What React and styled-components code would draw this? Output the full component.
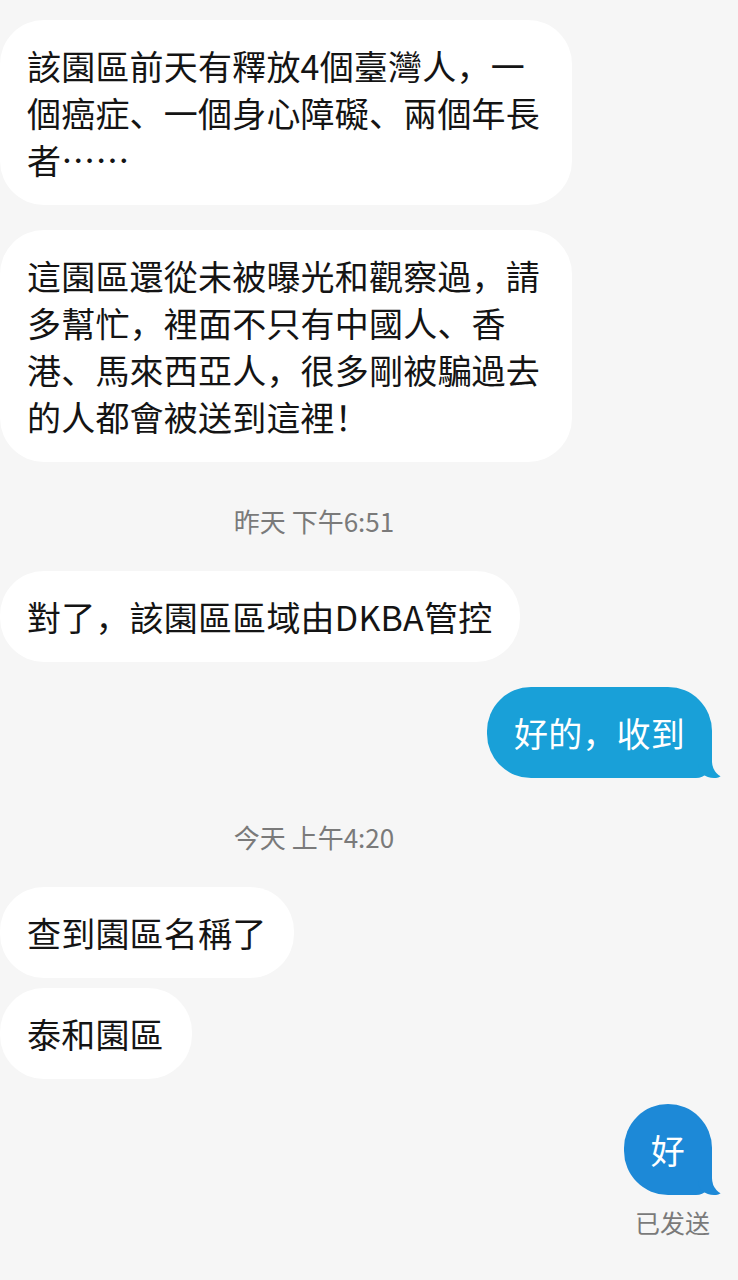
import styled, { createGlobalStyle } from "styled-components";

const PAGE_BG = "#f6f6f6";

const GlobalStyle = createGlobalStyle`
    body {
        margin: 0;
        background: ${PAGE_BG};
        font-family: "Noto Sans CJK SC", "Noto Sans CJK TC", "Noto Sans", sans-serif;
    }
`

const Conversa = styled.main`
    min-height: 1280px;
    padding: 20px 0 0;
    box-sizing: border-box;
    display: flex;
    flex-direction: column;
`

const Linha = styled.div`
    display: flex;
    justify-content: ${p => p.$meu ? "flex-end" : "flex-start"};
    padding: ${p => p.$meu ? "0 26px 0 0" : "0"};
    margin-top: ${p => p.$mt || 0}px;
`

const Balao = styled.div`
    position: relative;
    box-sizing: border-box;
    max-width: 572px;
    padding: ${p => p.$meu ? "22px 27px" : "22px 28px 22px 27px"};
    border-radius: 44px;
    border-bottom-right-radius: ${p => p.$meu ? "16px" : "44px"};
    background: ${p => p.$meu ? p.$cor : "#fff"};
    color: ${p => p.$meu ? "#fff" : "#141414"};
    font-size: 34px;
    line-height: 47px;
    letter-spacing: 0.2px;

    ${p => p.$meu && `
        &::before {
            content: "";
            position: absolute;
            bottom: 0;
            right: -10px;
            width: 24px;
            height: 26px;
            background: ${p.$cor};
            border-bottom-left-radius: 16px 14px;
            border-bottom-right-radius: 6px 5px;
        }
        &::after {
            content: "";
            position: absolute;
            bottom: 0;
            right: -40px;
            width: 40px;
            height: 28px;
            background: ${PAGE_BG};
            border-bottom-left-radius: 15px 17px;
        }
    `}
`

const Horario = styled.div`
    margin-top: 41px;
    padding-right: 110px;
    text-align: center;
    font-size: 26px;
    line-height: 36px;
    color: #7a7a7a;
`

const Status = styled.div`
    margin-top: 12px;
    padding-right: 28px;
    text-align: right;
    font-size: 25px;
    line-height: 30px;
    color: #7a7a7a;
`

const mensagens = [
    { tipo: "msg", texto: "該園區前天有釋放4個臺灣人，一個癌症、一個身心障礙、兩個年長者……", mt: 0 },
    { tipo: "msg", texto: "這園區還從未被曝光和觀察過，請多幫忙，裡面不只有中國人、香港、馬來西亞人，很多剛被騙過去的人都會被送到這裡！", mt: 25 },
    { tipo: "hora", texto: "昨天 下午6:51" },
    { tipo: "msg", texto: "對了，該園區區域由DKBA管控", mt: 32 },
    { tipo: "msg", texto: "好的，收到", mt: 25, meu: true, cor: "#19a0d8" },
    { tipo: "hora", texto: "今天 上午4:20" },
    { tipo: "msg", texto: "查到園區名稱了", mt: 32 },
    { tipo: "msg", texto: "泰和園區", mt: 10 },
    { tipo: "msg", texto: "好", mt: 25, meu: true, cor: "#1d89d7" },
]

function App() {
    return (
        <>
            <GlobalStyle />
            <Conversa>
                {mensagens.map((m, i) => m.tipo === "hora" ? (
                    <Horario key={i}>{m.texto}</Horario>
                ) : (
                    <Linha key={i} $meu={m.meu} $mt={m.mt}>
                        <Balao $meu={m.meu} $cor={m.cor}>{m.texto}</Balao>
                    </Linha>
                ))}
                <Status>已发送</Status>
            </Conversa>
        </>
    )
}

export default App;
